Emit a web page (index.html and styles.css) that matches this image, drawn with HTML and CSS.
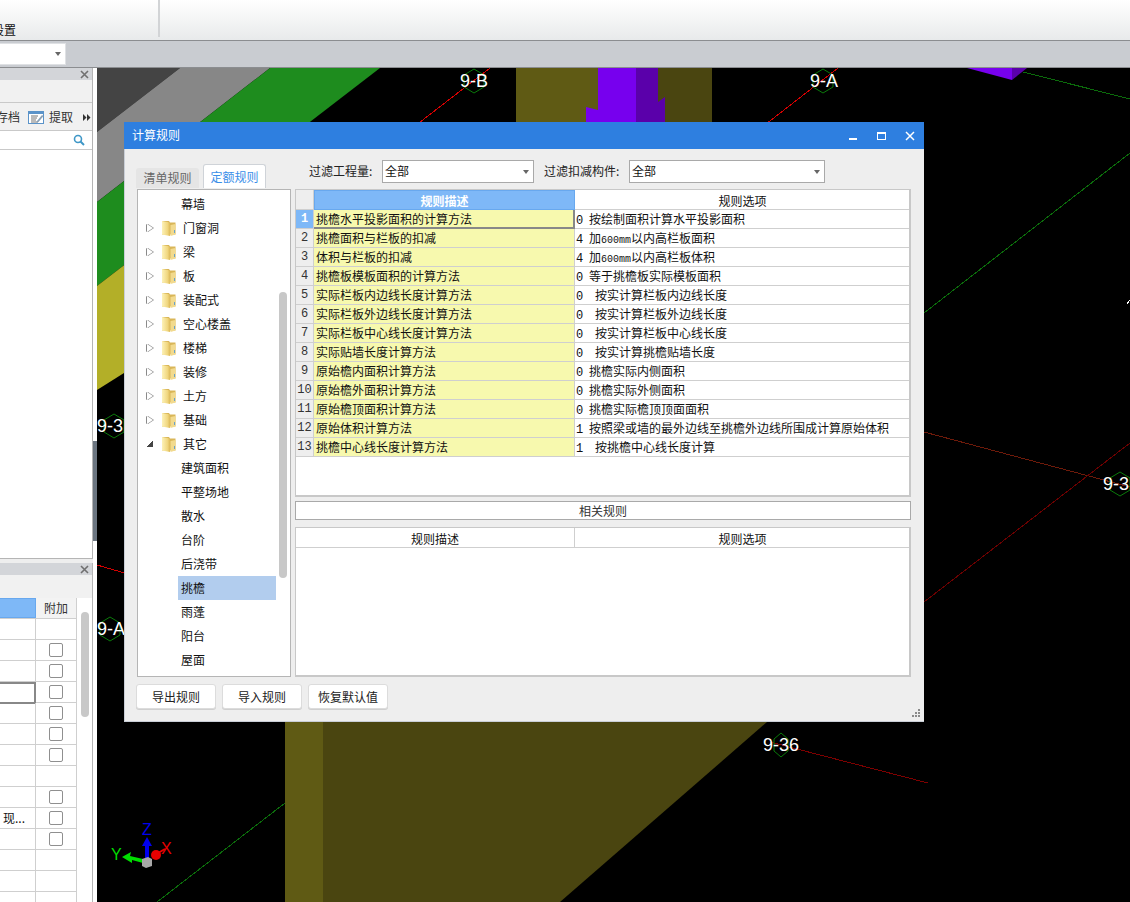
FILE: index.html
```html
<!DOCTYPE html>
<html lang="zh">
<head>
<meta charset="utf-8">
<title>计算规则</title>
<link rel="stylesheet" href="styles.css">
</head>
<body>
<div class="app">
  <header class="ribbon">
    <div class="ribbon-group"><span class="ribbon-label">设置</span></div>
  </header>
  <div class="toolstrip">
    <div class="strip-combo"><i class="arrow"></i></div>
  </div>
  <div class="workspace">
    <aside class="side">
      <section class="panel panel-top">
        <div class="panel-head"><svg class="panel-x" width="9" height="9" viewBox="0 0 9 9"><path d="M1 1l7 7M8 1l-7 7" stroke="#707070" stroke-width="1.600"/></svg></div>
        <div class="panel-tabs"></div>
        <div class="panel-tools">
          <span class="tool-cut">存档</span>
          <svg class="tool-icon" width="16" height="13" viewBox="0 0 16 13"><rect x="0.5" y="0.5" width="15" height="12" fill="#fff" stroke="#5b93c9"/><rect x="0.5" y="0.5" width="15" height="2.5" fill="#5b93c9"/><path d="M3 5h7M3 7h6M3 9h5M3 11h7" stroke="#777"/><path d="M9 10l5-6 1.500 1-5 6-2 0.500z" fill="#8aa0b5"/></svg>
          <span>提取</span>
          <svg class="tool-more" width="8" height="7" viewBox="0 0 8 7"><path d="M0 0l3.500 3.500L0 7zM4 0l3.500 3.500L4 7z" fill="#333"/></svg>
        </div>
        <div class="panel-search">
          <svg width="12" height="12" viewBox="0 0 12 12"><circle cx="5" cy="5" r="3.500" fill="none" stroke="#3f97c7" stroke-width="1.600"/><path d="M7.500 7.500l3.500 3.500" stroke="#3f97c7" stroke-width="2"/></svg>
        </div>
        <div class="panel-fill"></div>
      </section>
      <section class="panel panel-bottom">
        <div class="panel-head"><svg class="panel-x" width="9" height="9" viewBox="0 0 9 9"><path d="M1 1l7 7M8 1l-7 7" stroke="#707070" stroke-width="1.600"/></svg></div>
        <div class="panel-tabs panel-tabs-b"></div>
        <div class="side-body">
          <div class="side-table">
            <div class="side-row side-header"><div class="side-main side-main-h"></div><div class="side-add">附加</div></div>
            <div class="side-row"><div class="side-main"></div><div class="side-add"></div></div>
            <div class="side-row"><div class="side-main"></div><div class="side-add"><i class="box"></i></div></div>
            <div class="side-row"><div class="side-main"></div><div class="side-add"><i class="box"></i></div></div>
            <div class="side-row"><div class="side-main side-current"></div><div class="side-add"><i class="box"></i></div></div>
            <div class="side-row"><div class="side-main"></div><div class="side-add"><i class="box"></i></div></div>
            <div class="side-row"><div class="side-main"></div><div class="side-add"><i class="box"></i></div></div>
            <div class="side-row"><div class="side-main"></div><div class="side-add"><i class="box"></i></div></div>
            <div class="side-row"><div class="side-main"></div><div class="side-add"></div></div>
            <div class="side-row"><div class="side-main"></div><div class="side-add"><i class="box"></i></div></div>
            <div class="side-row"><div class="side-main side-text">现...</div><div class="side-add"><i class="box"></i></div></div>
            <div class="side-row"><div class="side-main"></div><div class="side-add"><i class="box"></i></div></div>
            <div class="side-row"><div class="side-main"></div><div class="side-add"></div></div>
            <div class="side-row"><div class="side-main"></div><div class="side-add"></div></div>
            <div class="side-row"><div class="side-main"></div><div class="side-add"></div></div>
          </div>
          <div class="side-scroll"><i class="side-thumb"></i></div>
        </div>
      </section>
    </aside>
    <div class="splitter"><i class="splitter-handle"></i></div>
    <main class="canvas">
      <svg class="scene" viewBox="97 68 1033 834" width="1033" height="834">
        <polygon points="97,68 180,68 97,132" fill="#444444"/>
        <polygon points="180,68 270,68 97,202 97,132" fill="#878787"/>
        <polygon points="270,68 380,68 97,286 97,202" fill="#1e8c1e"/>
        <polygon points="97,286 240,176 240,300 97,390" fill="#b3af28"/>
        <rect x="516" y="68" width="82" height="60" fill="#5f5a14"/>
        <rect x="658" y="68" width="54" height="60" fill="#4a4510"/>
        <polygon points="598,68 636,68 636,128 586,128 586,107 598,110" fill="#7700ee"/>
        <polygon points="636,68 658,68 658,102 665,97 665,128 636,128" fill="#5a00aa"/>
        <polygon points="967,68 1012,80 1012,68" fill="#7700ee"/>
        <polygon points="1012,68 1027,68 1012,80" fill="#5a00aa"/>
        <rect x="285" y="715" width="38" height="187" fill="#5f5a14"/>
        <polygon points="323,715 767,715 767,722 560,902 323,902" fill="#4a4510"/>
        <g class="lines" fill="none" stroke-width="1">
          <path d="M490,68L415,126" stroke="#d40000"/>
          <path d="M838,68L766,124" stroke="#d40000"/>
          <path d="M1023,72L1130,99" stroke="#0b6b0b"/>
          <path d="M924,313L1130,153" stroke="#0b6b0b"/>
          <path d="M924,432L1130,487" stroke="#6e1a0a"/>
          <path d="M924,602L1130,443" stroke="#6b0000"/>
          <path d="M97,565L128,574" stroke="#d40000"/>
          <path d="M285,803L157,902" stroke="#0b6b0b"/>
          <path d="M770,742L928,783" stroke="#7d0000"/>
          <path d="M1127,304L1130,300" stroke="#ffffff"/>
        </g>
        <g fill="none" stroke="#0a7a0a">
          <polygon points="474,69 484,75 484,87 474,93 464,87 464,75"/>
          <polygon points="823,69 833,75 833,87 823,93 813,87 813,75"/>
          <polygon points="114,414 124,420 124,432 114,438 104,432 104,420"/>
          <polygon points="110,617 120,623 120,635 110,641 100,635 100,623"/>
          <polygon points="1120,472 1130,478 1130,490 1120,496 1110,490 1110,478"/>
          <polygon points="781,733 788,739 788,751 781,757 774,751 774,739"/>
        </g>
        <g class="axis-label">
          <text x="460" y="87">9-B</text>
          <text x="810" y="87">9-A</text>
          <text x="97" y="432">9-3</text>
          <text x="97" y="635">9-A</text>
          <text x="1103" y="490">9-3</text>
          <text x="763" y="751">9-36</text>
        </g>
        <g>
          <path d="M145,862h4v-16h3l-5,-9 -5,9h3z" fill="#0000ee"/>
          <path d="M143,859l-13,-3 1,-4 -9,5 10,6 0,-3 11,3z" fill="#00dd00"/>
          <circle cx="156" cy="855" r="5" fill="#e80000"/>
          <path d="M158,853l7,-4" stroke="#e80000" stroke-width="2"/>
          <polygon points="142,859 148,857 152,859 152,866 146,868 142,866" fill="#a8a8a8"/>
          <text class="gizmo gizmo-z" x="142" y="835">Z</text>
          <text class="gizmo gizmo-y" x="111" y="860">Y</text>
          <text class="gizmo gizmo-x" x="161" y="854">X</text>
        </g>
      </svg>

      <div class="dialog">
        <div class="title-bar">
          <span class="title-text">计算规则</span>
          <div class="title-controls">
            <svg width="10" height="10" viewBox="0 0 10 10"><rect x="0" y="7" width="8" height="2" fill="#fff"/></svg>
            <svg width="10" height="10" viewBox="0 0 10 10"><rect x="0.500" y="1.500" width="8" height="7" fill="none" stroke="#fff"/><rect x="0" y="1" width="9" height="2" fill="#fff"/></svg>
            <svg width="10" height="10" viewBox="0 0 10 10"><path d="M1 1l8 8M9 1l-8 8" stroke="#fff" stroke-width="1.500"/></svg>
          </div>
        </div>
        <div class="dialog-body">
          <div class="col-left">
            <div class="tabs">
              <span class="tab">清单规则</span>
              <span class="tab tab-active">定额规则</span>
            </div>
            <div class="tree">
              <div class="tree-row leaf">幕墙</div>
              <div class="tree-row"><i class="tri"></i><svg class="folder" viewBox="0 0 14 16"><use href="#fold"/></svg>门窗洞</div>
              <div class="tree-row"><i class="tri"></i><svg class="folder" viewBox="0 0 14 16"><use href="#fold"/></svg>梁</div>
              <div class="tree-row"><i class="tri"></i><svg class="folder" viewBox="0 0 14 16"><use href="#fold"/></svg>板</div>
              <div class="tree-row"><i class="tri"></i><svg class="folder" viewBox="0 0 14 16"><use href="#fold"/></svg>装配式</div>
              <div class="tree-row"><i class="tri"></i><svg class="folder" viewBox="0 0 14 16"><use href="#fold"/></svg>空心楼盖</div>
              <div class="tree-row"><i class="tri"></i><svg class="folder" viewBox="0 0 14 16"><use href="#fold"/></svg>楼梯</div>
              <div class="tree-row"><i class="tri"></i><svg class="folder" viewBox="0 0 14 16"><use href="#fold"/></svg>装修</div>
              <div class="tree-row"><i class="tri"></i><svg class="folder" viewBox="0 0 14 16"><use href="#fold"/></svg>土方</div>
              <div class="tree-row"><i class="tri"></i><svg class="folder" viewBox="0 0 14 16"><use href="#fold"/></svg>基础</div>
              <div class="tree-row"><i class="tri tri-open"></i><svg class="folder" viewBox="0 0 14 16"><use href="#fold"/></svg>其它</div>
              <div class="tree-row leaf">建筑面积</div>
              <div class="tree-row leaf">平整场地</div>
              <div class="tree-row leaf">散水</div>
              <div class="tree-row leaf">台阶</div>
              <div class="tree-row leaf">后浇带</div>
              <div class="tree-row leaf"><span class="tree-selected">挑檐</span></div>
              <div class="tree-row leaf">雨蓬</div>
              <div class="tree-row leaf">阳台</div>
              <div class="tree-row leaf">屋面</div>
              <i class="tree-thumb"></i>
            </div>
          </div>
          <div class="col-right">
            <div class="filters">
              <label class="filter-label">过滤工程量:</label>
              <div class="combo combo-a">全部<i class="arrow"></i></div>
              <label class="filter-label">过滤扣减构件:</label>
              <div class="combo combo-b">全部<i class="arrow"></i></div>
            </div>
            <div class="grid grid-main">
              <div class="row row-head">
                <div class="cell-n"></div>
                <div class="cell-d head-active">规则描述</div>
                <div class="cell-o cell-center">规则选项</div>
              </div>
              <div class="row"><div class="cell-n n-active">1</div><div class="cell-d d-current">挑檐水平投影面积的计算方法</div><div class="cell-o"><b>0</b>按绘制面积计算水平投影面积</div></div>
              <div class="row"><div class="cell-n">2</div><div class="cell-d">挑檐面积与栏板的扣减</div><div class="cell-o"><b>4</b>加<span class="latin">600mm</span>以内高栏板面积</div></div>
              <div class="row"><div class="cell-n">3</div><div class="cell-d">体积与栏板的扣减</div><div class="cell-o"><b>4</b>加<span class="latin">600mm</span>以内高栏板体积</div></div>
              <div class="row"><div class="cell-n">4</div><div class="cell-d">挑檐板模板面积的计算方法</div><div class="cell-o"><b>0</b>等于挑檐板实际模板面积</div></div>
              <div class="row"><div class="cell-n">5</div><div class="cell-d">实际栏板内边线长度计算方法</div><div class="cell-o"><b class="wide">0</b>按实计算栏板内边线长度</div></div>
              <div class="row"><div class="cell-n">6</div><div class="cell-d">实际栏板外边线长度计算方法</div><div class="cell-o"><b class="wide">0</b>按实计算栏板外边线长度</div></div>
              <div class="row"><div class="cell-n">7</div><div class="cell-d">实际栏板中心线长度计算方法</div><div class="cell-o"><b class="wide">0</b>按实计算栏板中心线长度</div></div>
              <div class="row"><div class="cell-n">8</div><div class="cell-d">实际贴墙长度计算方法</div><div class="cell-o"><b class="wide">0</b>按实计算挑檐贴墙长度</div></div>
              <div class="row"><div class="cell-n">9</div><div class="cell-d">原始檐内面积计算方法</div><div class="cell-o"><b>0</b>挑檐实际内侧面积</div></div>
              <div class="row"><div class="cell-n">10</div><div class="cell-d">原始檐外面积计算方法</div><div class="cell-o"><b>0</b>挑檐实际外侧面积</div></div>
              <div class="row"><div class="cell-n">11</div><div class="cell-d">原始檐顶面积计算方法</div><div class="cell-o"><b>0</b>挑檐实际檐顶顶面面积</div></div>
              <div class="row"><div class="cell-n">12</div><div class="cell-d">原始体积计算方法</div><div class="cell-o"><b>1</b>按照梁或墙的最外边线至挑檐外边线所围成计算原始体积</div></div>
              <div class="row"><div class="cell-n">13</div><div class="cell-d">挑檐中心线长度计算方法</div><div class="cell-o"><b class="wide">1</b>按挑檐中心线长度计算</div></div>
            </div>
            <div class="related-bar">相关规则</div>
            <div class="grid grid-sub">
              <div class="row row-head row-sub">
                <div class="cell-sub">规则描述</div>
                <div class="cell-o cell-center">规则选项</div>
              </div>
            </div>
          </div>
        </div>
        <div class="dialog-foot">
          <button class="btn">导出规则</button>
          <button class="btn">导入规则</button>
          <button class="btn">恢复默认值</button>
        </div>
        <svg class="grip" width="9" height="9" viewBox="0 0 9 9"><path d="M6 0h2v2H6zM3 3h2v2H3zM6 3h2v2H6zM0 6h2v2H0zM3 6h2v2H3zM6 6h2v2H6z" fill="#8a8a8a"/></svg>
      </div>
    </main>
  </div>
</div>
<svg class="defs" width="0" height="0">
  <defs>
    <linearGradient id="fg" x1="0" y1="0" x2="1" y2="0"><stop offset="0" stop-color="#fdf2b8"/><stop offset="0.7" stop-color="#f0d67e"/><stop offset="1" stop-color="#dcb958"/></linearGradient>
    <symbol id="fold" viewBox="0 0 14 16">
      <path d="M0 1h7l1 1.500h5.500V14.500H0z" fill="#d9b658"/>
      <path d="M0 1l8 1.500V16L0 14.500z" fill="url(#fg)"/>
      <path d="M8.500 5l5 -1v10.500l-5 1.500z" fill="#f2da8e"/>
      <rect x="12" y="10" width="1" height="3" fill="#6aa2c8"/>
    </symbol>
  </defs>
</svg>
</body>
</html>
```
FILE: styles.css
```css
* { box-sizing: border-box; }
html, body { margin: 0; padding: 0; width: 1130px; height: 902px; overflow: hidden; background: #000; }
body { font: 12px/1.2 "Noto Sans CJK SC", "Liberation Sans", sans-serif; color: #111; }
.defs { position: absolute; }
.app { display: flex; flex-direction: column; width: 1130px; height: 902px; }

.ribbon { height: 41px; flex: none; display: flex; background: linear-gradient(#ffffff, #e8eaeb); border-bottom: 1px solid #8b8d90; }
.ribbon-group { width: 160px; height: 37px; border-right: 2px solid #d2d4d6; display: flex; align-items: flex-end; overflow: hidden; }
.ribbon-label { margin-left: -8px; line-height: 16px; margin-bottom: -1px; }

.toolstrip { height: 27px; flex: none; background: #c9ccd1; border-bottom: 1px solid #8b8d90; padding-top: 2px; }
.strip-combo { width: 66px; height: 22px; background: #fff; border: 1px solid #dfe1e4; border-left: 0; position: relative; }
.arrow { position: absolute; right: 4px; top: 50%; margin-top: -2px; width: 0; height: 0; border: 3.5px solid transparent; border-top: 4px solid #666; border-bottom: 0; }

.workspace { flex: 1; display: flex; min-height: 0; }
.side { width: 93px; flex: none; background: #eeeeee; display: flex; flex-direction: column; overflow: hidden; }
.panel { display: flex; flex-direction: column; border-right: 1px solid #b5b5b5; }
.panel-top { height: 491px; flex: none; background: #fff; border-bottom: 1px solid #b5b5b5; }
.panel-bottom { margin-top: 4px; flex: 1; min-height: 0; background: #fff; }
.panel-head { height: 12px; flex: none; background: #d3d5d9; display: flex; justify-content: flex-end; align-items: center; padding-right: 3px; }
.panel-x { display: block; }
.panel-tabs { height: 23px; flex: none; background: #f1f1f1; border-bottom: 1px solid #c9c9c9; }
.panel-tabs-b { border-bottom: 0; }
.panel-tools { height: 28px; flex: none; background: #f1f1f1; border-bottom: 1px solid #c9c9c9; display: flex; align-items: center; color: #333; padding-top: 2px; }
.tool-cut { margin-left: -4px; }
.tool-icon { margin: 0 5px 0 8px; }
.tool-more { margin-left: 10px; flex: none; }
.panel-search { height: 19px; flex: none; border-bottom: 1px solid #c9c9c9; display: flex; align-items: center; justify-content: flex-end; padding-right: 7px; }
.panel-fill { flex: 1; }

.side-body { flex: 1; display: flex; min-height: 0; }
.side-table { width: 77px; flex: none; }
.side-row { display: flex; height: 21px; border-bottom: 1px solid #cfcfcf; }
.side-header { height: 21px; }
.side-main { width: 36px; flex: none; border-right: 1px solid #cfcfcf; }
.side-main-h { background: #7eb8f7; border: 1px solid #68a8ee; border-left: 0; }
.side-current { border: 2px solid #888; border-left: 0; height: 22px; }
.side-text { line-height: 20px; padding-left: 3px; white-space: nowrap; overflow: visible; }
.side-add { width: 41px; flex: none; border-right: 1px solid #cfcfcf; display: flex; align-items: center; justify-content: center; color: #333; }
.side-header .side-add { background: #f3f3f3; }
.box { display: block; width: 14px; height: 14px; border: 1px solid #8f8f8f; border-radius: 2px; background: #fff; }
.side-scroll { flex: 1; padding: 14px 3px 0 4px; }
.side-thumb { display: block; width: 8px; height: 105px; background: #c8c8c8; border-radius: 4px; }

.splitter { width: 4px; flex: none; background: #fff; position: relative; }
.splitter-handle { position: absolute; left: 0; top: 373px; width: 4px; height: 100px; background: #6b7580; }

.canvas { flex: 1; position: relative; background: #000; overflow: hidden; }
.scene { position: absolute; left: 0; top: 0; display: block; }
.lines { shape-rendering: crispEdges; }
.axis-label text { font: 18px "Liberation Sans", sans-serif; fill: #fff; }
.gizmo { font: 16px "Liberation Sans", sans-serif; }
.gizmo-z { fill: #0000ee; }
.gizmo-y { fill: #00dd00; }
.gizmo-x { fill: #e80000; }

.dialog { position: absolute; left: 27px; top: 54px; width: 800px; height: 600px; background: #eeeeee; border: 1px solid #c9ced6; border-top: 0; border-right: 0; display: flex; flex-direction: column; }
.title-bar { height: 27px; margin: 0 0 0 -1px; flex: none; background: #2e7fe0; color: #fff; display: flex; align-items: center; justify-content: space-between; padding: 0 9px 0 8px; font-size: 12px; letter-spacing: 0; }
.title-controls { display: flex; gap: 18px; align-items: center; }
.dialog-body { display: flex; padding: 11px 13px 0 11px; height: 528px; flex: none; }
.col-left { width: 155px; flex: none; padding-top: 4px; margin-right: 4px; }
.tabs { height: 24px; display: flex; align-items: flex-end; gap: 4px; padding-left: 0; }
.tab { width: 63px; height: 20px; background: #e5e5e5; color: #666; text-align: center; line-height: 19px; border-radius: 3px 3px 0 0; }
.tab-active { height: 24px; background: #fff; color: #3a8ee8; border: 1px solid #cfd3d8; border-bottom: 0; line-height: 24px; }
.tree { margin: 1px 0 0 1px; height: 488px; background: #fff; border: 1px solid #b5b5b5; position: relative; overflow: hidden; padding-top: 2px; }
.tree-row { height: 24px; display: flex; align-items: center; padding-left: 9px; white-space: nowrap; }
.tree-row.leaf { padding-left: 43px; }
.tri { width: 0; height: 0; border-left: 6px solid #fff; border-top: 4px solid transparent; border-bottom: 4px solid transparent; position: relative; margin-right: 9px; filter: drop-shadow(1px 0 0 #8a8a8a) drop-shadow(-1px 0 0 #8a8a8a); }
.tri-open { border: 0; width: 6px; height: 6px; background: linear-gradient(135deg, transparent 50%, #444 50%); filter: none; }
.folder { width: 14px; height: 16px; margin-right: 7px; flex: none; }
.tree-selected { display: block; width: 98px; height: 24px; line-height: 24px; background: #b2cdee; margin-left: -3px; padding-left: 3px; }
.tree-thumb { position: absolute; left: 141px; top: 102px; width: 8px; height: 286px; background: #c8c8c8; border-radius: 4px; }

.col-right { width: 616px; flex: none; }
.filters { height: 23px; display: flex; align-items: center; margin-bottom: 6px; padding-left: 14px; }
.filter-label { width: 73px; flex: none; color: #222; }
.filter-label ~ .filter-label { width: 85px; margin-left: 10px; }
.combo { height: 23px; background: #fff; border: 1px solid #a9a9a9; position: relative; line-height: 20px; padding-left: 2px; }
.combo-a { width: 152px; }
.combo-b { width: 196px; }
.combo .arrow { right: 4px; }

.grid { background: #fff; border: solid #c8c8c8; border-width: 1px 2px 2px 1px; }
.grid-main { height: 308px; }
.row { display: flex; height: 19px; line-height: 18px; white-space: nowrap; }
.row-head { height: 20px; line-height: 21px; }
.cell-n { width: 18px; flex: none; background: #eeeeee; border-right: 1px solid #cfcfcf; border-bottom: 1px solid #cfcfcf; text-align: center; font: 12px/19px "Liberation Mono", monospace; color: #333; }
.n-active { background: #7eb8f7; color: #fff; font-weight: bold; }
.cell-d { width: 261px; flex: none; background: #f7f9ae; border-right: 1px solid #cfcfcf; border-bottom: 1px solid #cfcfcf; padding-left: 2px; }
.head-active { background: #7eb8f7; border: 1px solid #68a8ee; color: #fff; font-weight: bold; text-align: center; padding: 0; line-height: 19px; }
.d-current { border-right: 2px solid #888; border-bottom: 2px solid #888; }
.cell-o { flex: 1; min-width: 0; background: #fff; border-bottom: 1px solid #cfcfcf; padding-left: 1px; }
.cell-o b { display: inline-block; font: 12px/18px "Liberation Mono", monospace; width: 13px; }
.cell-o b.wide { width: 19px; }
.latin { font: 10px/18px "Liberation Mono", monospace; }
.cell-center { text-align: center; }
.related-bar { height: 19px; margin-top: 4px; background: #fff; border: 1px solid #a9a9a9; text-align: center; line-height: 17px; color: #333; }
.grid-sub { margin-top: 7px; height: 150px; }
.row-sub { height: 20px; }
.cell-sub { width: 279px; flex: none; text-align: center; border-right: 1px solid #cfcfcf; border-bottom: 1px solid #cfcfcf; }

.dialog-foot { display: flex; gap: 6px; padding: 7px 0 0 11px; }
.btn { width: 80px; height: 25px; background: #fff; border: 1px solid #dcdcdc; border-radius: 3px; font: inherit; color: #222; padding: 2px 0 0; box-shadow: 0 1px 0 #cfcfcf; }
.grip { position: absolute; right: 3px; bottom: 3px; }
```
